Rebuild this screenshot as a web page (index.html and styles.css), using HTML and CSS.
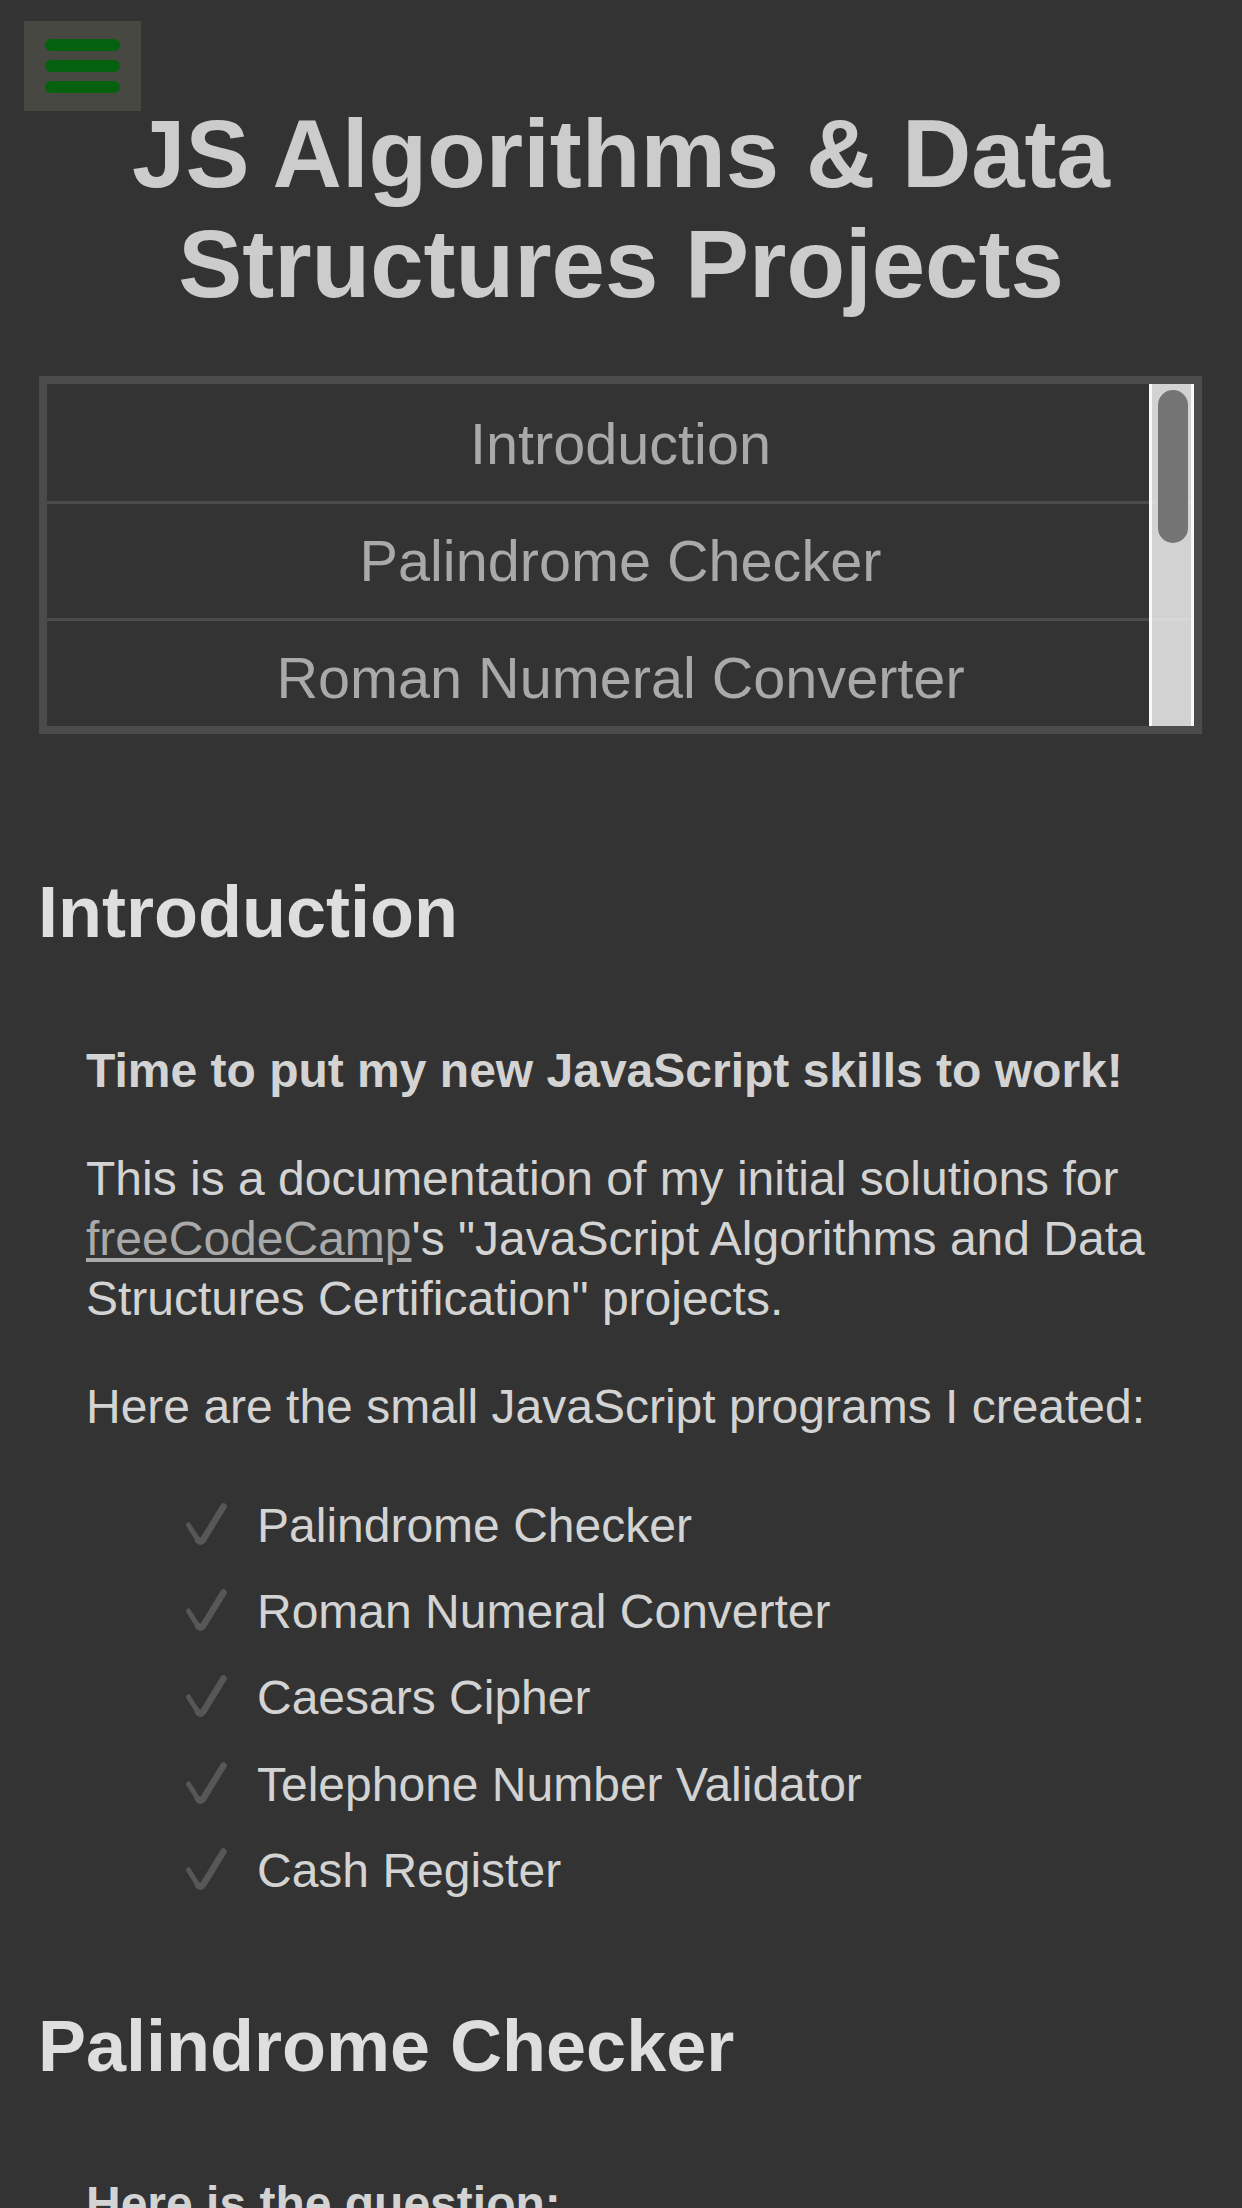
FILE: index.html
```html
<!DOCTYPE html>
<html lang="en">
<head>
<meta charset="utf-8">
<title>JS Algorithms &amp; Data Structures Projects</title>
<link rel="stylesheet" href="styles.css">
</head>
<body>
<button class="menu-toggle" aria-label="Menu">
  <span class="menu-bar"></span>
  <span class="menu-bar"></span>
  <span class="menu-bar"></span>
</button>

<header class="page-header">
  <h1 class="page-title">JS Algorithms &amp; Data Structures Projects</h1>
</header>

<nav class="toc">
  <ul class="toc-list">
    <li class="toc-item"><a class="toc-link" href="#introduction">Introduction</a></li>
    <li class="toc-item"><a class="toc-link" href="#palindrome">Palindrome Checker</a></li>
    <li class="toc-item"><a class="toc-link" href="#roman">Roman Numeral Converter</a></li>
    <li class="toc-item"><a class="toc-link" href="#caesar">Caesars Cipher</a></li>
    <li class="toc-item"><a class="toc-link" href="#telephone">Telephone Number Validator</a></li>
    <li class="toc-item"><a class="toc-link" href="#cash">Cash Register</a></li>
  </ul>
  <div class="toc-scrollbar"><div class="toc-thumb"></div></div>
</nav>

<main class="content">
  <section class="doc-section" id="introduction">
    <h2 class="section-title">Introduction</h2>
    <article class="section-body">
      <p class="lead">Time to put my new JavaScript skills to work!</p>
      <p>This is a documentation of my initial solutions for <a class="text-link" href="#">freeCodeCamp</a>'s "JavaScript Algorithms and Data Structures Certification" projects.</p>
      <p>Here are the small JavaScript programs I created:</p>
      <ul class="checklist">
        <li><svg class="check-icon" viewBox="0 0 42 42" aria-hidden="true"><path class="check-short" d="M3.5 22 L13 37"/><path class="check-long" d="M13 37 Q15.5 40.5 18 37 L38.5 3.5"/></svg>Palindrome Checker</li>
        <li><svg class="check-icon" viewBox="0 0 42 42" aria-hidden="true"><path class="check-short" d="M3.5 22 L13 37"/><path class="check-long" d="M13 37 Q15.5 40.5 18 37 L38.5 3.5"/></svg>Roman Numeral Converter</li>
        <li><svg class="check-icon" viewBox="0 0 42 42" aria-hidden="true"><path class="check-short" d="M3.5 22 L13 37"/><path class="check-long" d="M13 37 Q15.5 40.5 18 37 L38.5 3.5"/></svg>Caesars Cipher</li>
        <li><svg class="check-icon" viewBox="0 0 42 42" aria-hidden="true"><path class="check-short" d="M3.5 22 L13 37"/><path class="check-long" d="M13 37 Q15.5 40.5 18 37 L38.5 3.5"/></svg>Telephone Number Validator</li>
        <li><svg class="check-icon" viewBox="0 0 42 42" aria-hidden="true"><path class="check-short" d="M3.5 22 L13 37"/><path class="check-long" d="M13 37 Q15.5 40.5 18 37 L38.5 3.5"/></svg>Cash Register</li>
      </ul>
    </article>
  </section>

  <section class="doc-section" id="palindrome">
    <h2 class="section-title">Palindrome Checker</h2>
    <article class="section-body">
      <p class="lead">Here is the question:</p>
      <p>Return true if the given string is a palindrome. Otherwise, return false.</p>
    </article>
  </section>
</main>
</body>
</html>
```

FILE: styles.css
```css
html {
  background: #333333;
}

body {
  margin: 0;
  background: #333333;
  font-family: "Liberation Sans", Arial, Helvetica, sans-serif;
  color: #d3d3d3;
  font-size: 48px;
}

.menu-toggle {
  position: fixed;
  top: 21px;
  left: 24px;
  width: 117px;
  height: 90px;
  margin: 0;
  padding: 18px 21px;
  border: 0;
  background: #484843;
  display: flex;
  flex-direction: column;
  justify-content: space-between;
  z-index: 5;
}

.menu-bar {
  display: block;
  width: 75px;
  height: 12px;
  border-radius: 6px;
  background: #04620f;
}

.page-header {
  padding-top: 99px;
}

.page-title {
  margin: 0;
  font-size: 96px;
  line-height: 1.15;
  font-weight: 700;
  text-align: center;
  color: #cccccc;
}

.toc {
  position: relative;
  margin: 56px 40px 0 39px;
  border: 8px solid #4b4b4b;
  height: 342px;
  overflow: hidden;
}

.toc-list {
  list-style: none;
  margin: 0;
  padding: 0;
}

.toc-item {
  border-top: 3px solid #4b4b4b;
}

.toc-item:first-child {
  border-top-color: #333333;
}

.toc-link {
  display: block;
  height: 114px;
  line-height: 114px;
  font-size: 57.6px;
  text-align: center;
  color: #a9a9a9;
  text-decoration: none;
}

.toc-scrollbar {
  position: absolute;
  top: 0;
  right: 0;
  bottom: 0;
  width: 45px;
  padding: 6px 3px 0 6px;
  border-left: 3px solid rgba(255, 255, 255, 0.86);
  border-right: 3px solid rgba(255, 255, 255, 0.86);
  background: rgba(255, 255, 255, 0.78);
  box-sizing: border-box;
}

.toc-thumb {
  height: 153px;
  border-radius: 15px;
  background: #747474;
}

.content {
  display: flex;
  flex-direction: column;
  gap: 90px;
  padding: 137px 38px 0;
}

.section-title {
  margin: 0 0 87px;
  font-size: 72px;
  line-height: 1.15;
  font-weight: 700;
  color: #dedede;
}

.section-body {
  margin: 0 0 0 48px;
}

.section-body p {
  margin: 0 0 48px;
  line-height: 60px;
}

.section-body .lead {
  font-weight: 700;
}

.text-link {
  color: #a9a9a9;
}

.checklist {
  list-style: none;
  margin: -2px 0 0 99px;
  padding: 0;
}

.checklist li {
  line-height: 86.4px;
}

.check-icon {
  width: 42px;
  height: 42px;
  margin-right: 30px;
  vertical-align: -3px;
  fill: none;
  stroke: #575757;
  stroke-linecap: round;
  stroke-linejoin: round;
}

.check-short {
  stroke-width: 5px;
}

.check-long {
  stroke-width: 6.5px;
}
```
